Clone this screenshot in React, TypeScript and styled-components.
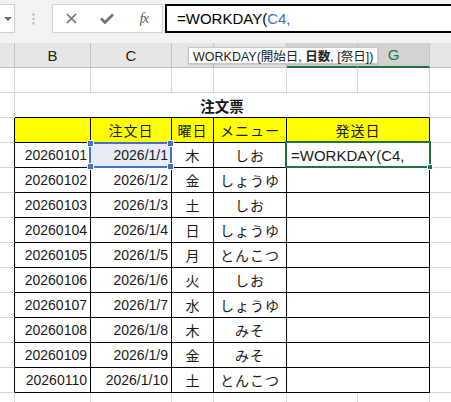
import React from 'react';
import styled, { createGlobalStyle } from 'styled-components';

const GlobalStyle = createGlobalStyle`
  *, *::before, *::after { box-sizing: border-box; }
  html, body { margin: 0; padding: 0; background: #fff; }
  body { font-family: "Liberation Sans", "Noto Sans CJK JP", sans-serif; }
`;

type Edge = 'grid' | 'ink';
const edgeColor = (e?: Edge) => (e === 'ink' ? '#000' : '#d6d6d6');

const Window = styled.div`
  position: relative;
  width: 451px;
  height: 402px;
  overflow: hidden;
  background: #fff;
`;

const FormulaBar = styled.div`
  display: flex;
  align-items: flex-start;
  height: 43px;
  padding-top: 4px;
  background: #f3f3f3;
`;

const NameBox = styled.div`
  width: 15px;
  height: 29px;
  display: flex;
  align-items: center;
  justify-content: flex-end;
  padding-right: 2px;
  background: #fff;
  border: 1px solid #d0d0d0;
  border-left: 0;
`;

const Grip = styled.div`
  width: 37px;
  height: 29px;
  display: flex;
  align-items: center;
  justify-content: center;
`;

const EditButtons = styled.div`
  width: 111px;
  height: 29px;
  display: grid;
  grid-template-columns: repeat(3, 1fr);
  background: #fff;
  border: 1px solid #d4d4d4;
`;

const EditButton = styled.div`
  display: flex;
  align-items: center;
  justify-content: center;
  color: #6e6e6e;
`;

const FxLabel = styled.span`
  font-family: "Liberation Serif", serif;
  font-style: italic;
  font-size: 15px;
  color: #5e5e5e;
  letter-spacing: -1px;
`;

const FormulaInput = styled.div`
  flex: 1;
  margin-left: 2px;
  margin-right: -20px;
  height: 29px;
  display: flex;
  align-items: center;
  padding-left: 10px;
  border: 2px solid #000;
  background: #fff;
  font-size: 15px;
  color: #000;
  white-space: pre;
`;

const Ref = styled.span`
  color: #3e6fc6;
`;

const Sheet = styled.div`
  display: grid;
  grid-template-columns: 15px 76px 81px 42px 73px 71px 72px 100px;
  grid-auto-rows: 25px;
  width: 530px;
`;

const ColHead = styled.div<{ $active?: boolean }>`
  display: flex;
  align-items: center;
  justify-content: center;
  background: ${p => (p.$active ? '#d2d2d2' : '#e6e6e6')};
  border-right: 1px solid #c4c4c4;
  border-bottom: ${p => (p.$active ? '2px solid #217346' : '1px solid #bdbdbd')};
  color: ${p => (p.$active ? '#217346' : '#222')};
  font-size: 15px;
`;

const Cell = styled.div<{
  $right?: Edge;
  $bottom?: Edge;
  $span?: number;
  $align?: 'left' | 'center' | 'right';
  $fill?: string;
  $bold?: boolean;
}>`
  grid-column: span ${p => p.$span ?? 1};
  position: relative;
  display: flex;
  align-items: center;
  justify-content: ${p =>
    p.$align === 'right' ? 'flex-end' : p.$align === 'center' ? 'center' : 'flex-start'};
  padding: 0 3px;
  border-right: 1px solid ${p => edgeColor(p.$right)};
  border-bottom: 1px solid ${p => edgeColor(p.$bottom)};
  background: ${p => p.$fill ?? 'transparent'};
  font-size: ${p => (p.$bold ? '14.5px' : '14px')};
  font-weight: ${p => (p.$bold ? 700 : 400)};
  white-space: nowrap;
  color: #1a1a1a;
`;

const Wide = styled.span`
  letter-spacing: 1px;
`;

const Selection = styled.div`
  position: absolute;
  inset: -1px -1px -1px -2px;
  border: 2px solid #4472c4;
  z-index: 2;
  pointer-events: none;
`;

const Handle = styled.span<{ $x: 'left' | 'right'; $y: 'top' | 'bottom' }>`
  position: absolute;
  width: 7px;
  height: 7px;
  background: #4472c4;
  border: 1px solid #fff;
  ${p => p.$x}: -4px;
  ${p => p.$y}: -4px;
`;

const ActiveFrame = styled.div`
  position: absolute;
  inset: -2px -2px -1px -2px;
  border: 2px solid #217346;
  z-index: 3;
  pointer-events: none;
`;

const FillHandle = styled.span`
  position: absolute;
  right: -4px;
  bottom: -4px;
  width: 6px;
  height: 6px;
  background: #217346;
  border: 1px solid #fff;
`;

const EditText = styled.span`
  font-size: 15px;
  padding-left: 1px;
`;

const Tooltip = styled.div`
  position: absolute;
  left: 188px;
  top: 47px;
  height: 17px;
  display: flex;
  align-items: center;
  padding: 0 4px;
  background: #fff;
  border: 1px solid #c8c8c8;
  box-shadow: 0 1px 2px rgba(0, 0, 0, 0.15);
  font-size: 12.5px;
  color: #222;
  white-space: pre;
  z-index: 5;
`;

const Arg = styled.b`
  font-weight: 700;
`;

const orders = [
  ['20260101', '2026/1/1', '木', 'しお'],
  ['20260102', '2026/1/2', '金', 'しょうゆ'],
  ['20260103', '2026/1/3', '土', 'しお'],
  ['20260104', '2026/1/4', '日', 'しょうゆ'],
  ['20260105', '2026/1/5', '月', 'とんこつ'],
  ['20260106', '2026/1/6', '火', 'しお'],
  ['20260107', '2026/1/7', '水', 'しょうゆ'],
  ['20260108', '2026/1/8', '木', 'みそ'],
  ['20260109', '2026/1/9', '金', 'みそ'],
  ['20260110', '2026/1/10', '土', 'とんこつ'],
];

// D, E and F sit under the argument tooltip, so their letters are not shown
const columns = ['', 'B', 'C', '', '', '', 'G', ''];

function PlainRow() {
  return (
    <>
      {[0, 1, 2, 3, 4, 5, 6, 7].map(i => (
        <Cell key={i} />
      ))}
    </>
  );
}

export default function App() {
  return (
    <Window>
      <GlobalStyle />
      <FormulaBar>
        <NameBox>
          <svg width="8" height="4" viewBox="0 0 8 4">
            <path d="M0 0h8L4 4z" fill="#6a6a6a" />
          </svg>
        </NameBox>
        <Grip>
          <svg width="3" height="12" viewBox="0 0 3 12">
            <circle cx="1.5" cy="1.5" r="1.2" fill="#b8b8b8" />
            <circle cx="1.5" cy="6" r="1.2" fill="#b8b8b8" />
            <circle cx="1.5" cy="10.5" r="1.2" fill="#b8b8b8" />
          </svg>
        </Grip>
        <EditButtons>
          <EditButton>
            <svg width="11" height="11" viewBox="0 0 11 11">
              <path d="M1 1l9 9M10 1l-9 9" stroke="currentColor" strokeWidth="1.6" />
            </svg>
          </EditButton>
          <EditButton>
            <svg width="14" height="11" viewBox="0 0 14 11">
              <path d="M1 5.5l4 4L13 1.5" stroke="currentColor" strokeWidth="2.6" fill="none" />
            </svg>
          </EditButton>
          <EditButton>
            <FxLabel>fx</FxLabel>
          </EditButton>
        </EditButtons>
        <FormulaInput>
          =WORKDAY(<Ref>C4,</Ref>
        </FormulaInput>
      </FormulaBar>

      <Sheet>
        {columns.map((c, i) => (
          <ColHead key={i} $active={i === 5 || i === 6}>
            {c}
          </ColHead>
        ))}

        <PlainRow />

        <Cell $bottom="grid" />
        <Cell $span={6} $align="center" $bold $bottom="ink">
          注文票
        </Cell>
        <Cell />

        <Cell $right="ink" />
        <Cell $fill="#ffff00" $right="ink" $bottom="ink" />
        <Cell $fill="#ffff00" $right="ink" $bottom="ink" $align="center">
          <Wide>注文日</Wide>
        </Cell>
        <Cell $fill="#ffff00" $right="ink" $bottom="ink" $align="center">
          <Wide>曜日</Wide>
        </Cell>
        <Cell $fill="#ffff00" $right="ink" $bottom="ink" $align="center">
          <Wide>メニュー</Wide>
        </Cell>
        <Cell $fill="#ffff00" $right="ink" $bottom="ink" $align="center" $span={2}>
          <Wide>発送日</Wide>
        </Cell>
        <Cell />

        {orders.map(([id, date, day, menu], r) => (
          <React.Fragment key={id}>
            <Cell $right="ink" />
            <Cell $right="ink" $bottom="ink" $align="right">
              {id}
            </Cell>
            <Cell $right="ink" $bottom="ink" $align="right" $fill={r === 0 ? '#e7ecf7' : undefined}>
              {date}
              {r === 0 && (
                <Selection>
                  <Handle $x="left" $y="top" />
                  <Handle $x="right" $y="top" />
                  <Handle $x="left" $y="bottom" />
                  <Handle $x="right" $y="bottom" />
                </Selection>
              )}
            </Cell>
            <Cell $right="ink" $bottom="ink" $align="center">
              {day}
            </Cell>
            <Cell $right="ink" $bottom="ink" $align="center">
              <Wide>{menu}</Wide>
            </Cell>
            <Cell $right="ink" $bottom="ink" $span={2}>
              {r === 0 && (
                <>
                  <EditText>=WORKDAY(C4,</EditText>
                  <ActiveFrame>
                    <FillHandle />
                  </ActiveFrame>
                </>
              )}
            </Cell>
            <Cell />
          </React.Fragment>
        ))}

        <PlainRow />
      </Sheet>

      <Tooltip>
        {'WORKDAY(開始日, '}
        <Arg>日数</Arg>
        {', [祭日])'}
      </Tooltip>
    </Window>
  );
}
